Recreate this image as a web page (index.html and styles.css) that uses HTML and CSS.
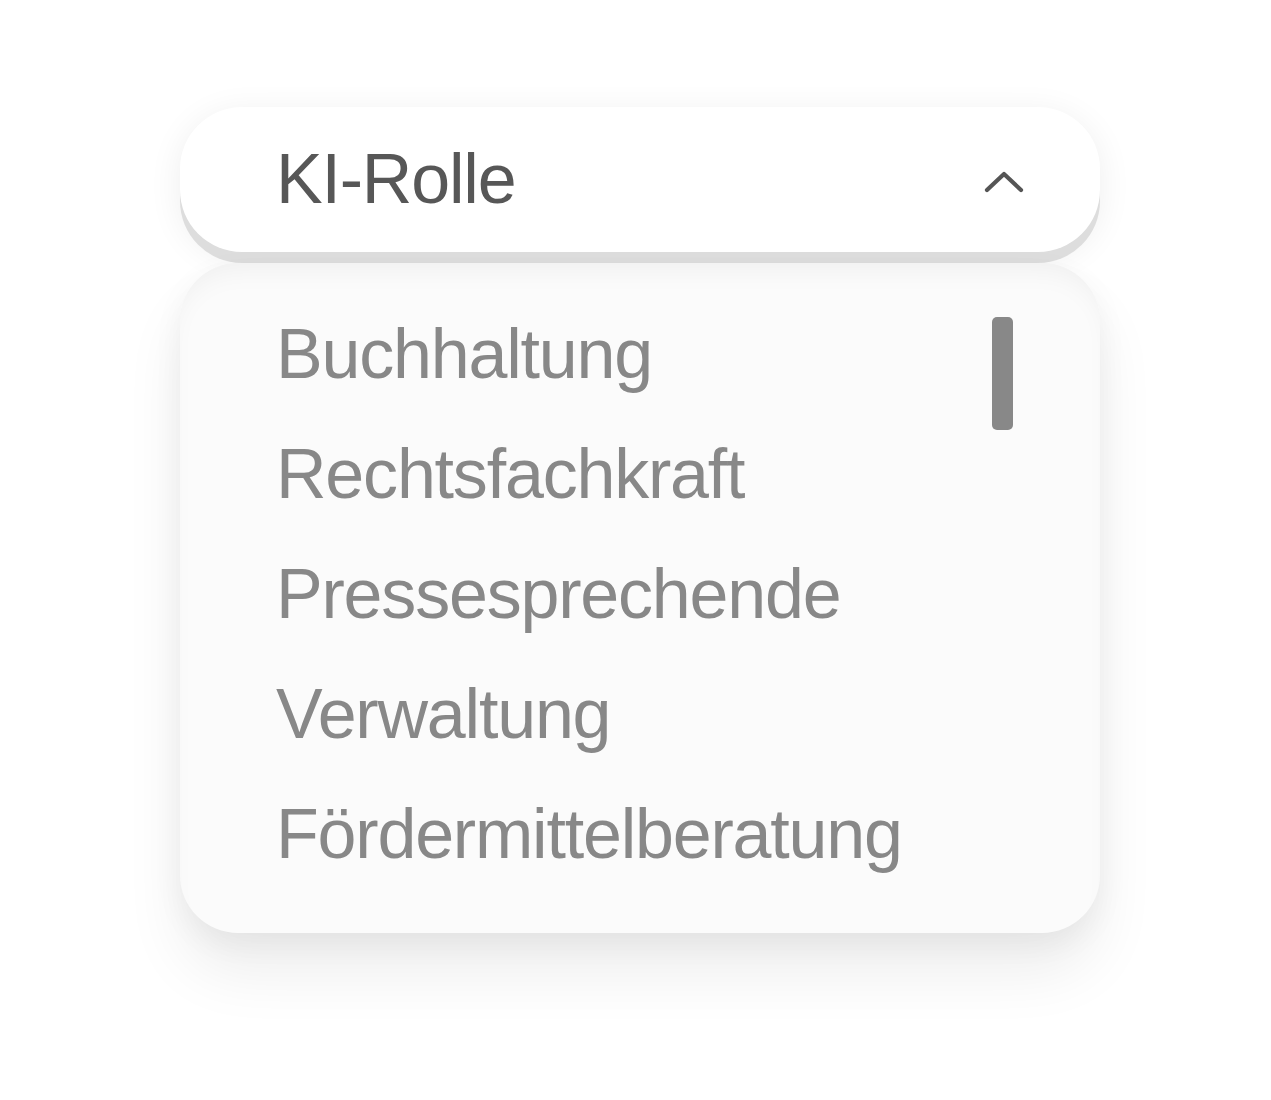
FILE: index.html
```html
<!DOCTYPE html>
<html lang="de">
<head>
    <meta charset="UTF-8">
    <meta name="viewport" content="width=device-width, initial-scale=1.0">
    <title>KI-Rolle</title>
    <link rel="stylesheet" href="styles.css">
</head>
<body>

    <!-- Auswahl KI-Rolle -->
    <div class="select">
        <div class="select-head">
            <span class="select-label">KI-Rolle</span>
            <svg class="chevron" width="40" height="23" viewBox="0 0 40 23">
                <path d="M3 20 L20 4 L37 20" fill="none" stroke="#555" stroke-width="4.2" stroke-linecap="round" stroke-linejoin="round"/>
            </svg>
        </div>

        <div class="select-panel">
            <ul class="option-list">
                <li>Buchhaltung</li>
                <li>Rechtsfachkraft</li>
                <li>Pressesprechende</li>
                <li>Verwaltung</li>
                <li>Fördermittelberatung</li>
            </ul>
            <div class="scroll-track">
                <div class="scroll-thumb"></div>
            </div>
        </div>
    </div>

</body>
</html>
```

FILE: styles.css
```css
html {
    background-color: #ffffff;
}

body {
    font-family: "Liberation Sans", Arial, sans-serif;
    margin: 0;
    padding: 107px 0 0 180px;
    min-height: 100vh;
    box-sizing: border-box;
}

.select {
    width: 920px;
    display: flex;
    flex-direction: column;
    gap: 11px;
}

.select-head {
    height: 145px;
    box-sizing: border-box;
    padding: 0 76px 2px 96px;
    display: flex;
    justify-content: space-between;
    align-items: center;
    background-color: #ffffff;
    border-radius: 62px;
    box-shadow: 0 11px 0 #dddddd,
                0 6px 34px rgba(0, 0, 0, 0.07);
}

.select-label {
    font-size: 70px;
    letter-spacing: -1.2px;
    color: #575757;
}

.chevron {
    margin-top: 6px;
}

.select-panel {
    height: 670px;
    display: flex;
    overflow: hidden;
    background-color: #fbfbfb;
    border-radius: 58px;
    box-shadow: inset 0 18px 28px -12px rgba(0, 0, 0, 0.05),
                0 40px 60px rgba(0, 0, 0, 0.07),
                0 10px 30px rgba(0, 0, 0, 0.05);
}

.option-list {
    flex: 1;
    list-style: none;
    margin: 0;
    padding: 31px 0 0 96px;
}

.option-list li {
    font-size: 70px;
    line-height: 120px;
    letter-spacing: -1.2px;
    color: #888888;
    white-space: nowrap;
}

.scroll-track {
    width: 21px;
    margin: 54px 87px 0 0;
}

.scroll-thumb {
    height: 113px;
    background-color: #888888;
    border-radius: 5px;
}
```
